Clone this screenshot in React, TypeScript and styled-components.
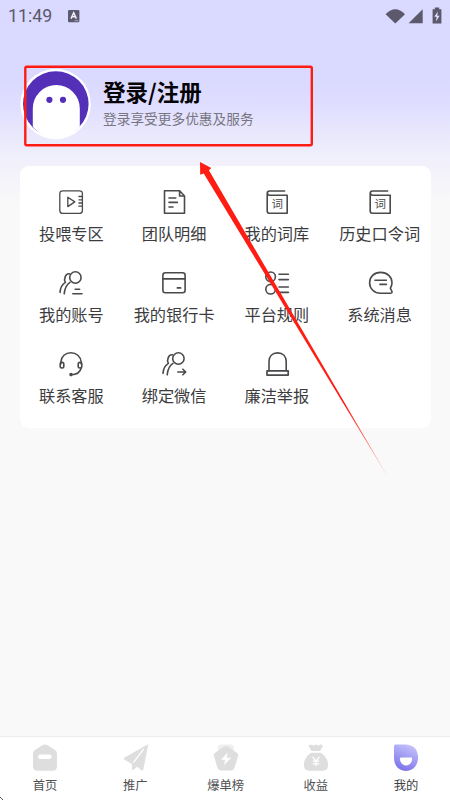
import React from 'react';
import styled, { createGlobalStyle, css } from 'styled-components';

const GlobalStyle = createGlobalStyle`
  * { box-sizing: border-box; }
  body { margin: 0; background: #f9f9f9; }
`;

const Screen = styled.div`
  position: relative;
  display: flex;
  flex-direction: column;
  width: 450px;
  height: 800px;
  overflow: hidden;
  background: linear-gradient(180deg, #dad9ff 0, #dad9ff 80px, #dfddff 103px, #ebeafc 140px, #f2f1fb 165px, #f9f9f9 205px);
  font-family: 'Noto Sans CJK SC', sans-serif;
`;

const StatusBar = styled.header`
  display: flex;
  align-items: center;
  height: 30px;
  padding: 1px 8px 0 8px;
  color: #5b596b;
`;

const Clock = styled.span`
  width: 60px;
  font: 400 17.8px/20px Roboto, sans-serif;
`;

const StatusIcons = styled.div`
  display: flex;
  align-items: center;
  margin-left: auto;
`;

const Profile = styled.section`
  display: flex;
  align-items: flex-start;
  height: 136px;
  padding: 38px 0 0 20px;
`;

const Avatar = styled.svg`
  display: block;
  width: 72px;
  height: 72px;
`;

const ProfileText = styled.div`
  padding: 7px 0 0 11px;
`;

const Title = styled.h1`
  margin: 0;
  color: #050507;
  font-size: 22.5px;
  font-weight: 700;
  line-height: 32px;
  white-space: nowrap;
`;

const Subtitle = styled.p`
  margin: 1px 0 0;
  color: #77757f;
  font-size: 13.7px;
  line-height: 20px;
  white-space: nowrap;
`;

const Panel = styled.main`
  display: grid;
  grid-template-columns: repeat(4, 102.75px);
  grid-auto-rows: 81.2px;
  width: 411px;
  height: 261.5px;
  margin-left: 20px;
  padding-top: 24px;
  border-radius: 9px;
  background: #fff;
`;

const MenuItem = styled.div`
  display: flex;
  flex-direction: column;
  align-items: center;
  gap: 9px;
  color: #3c3c3e;
`;

const MenuIcon = styled.svg`
  display: block;
  width: 24px;
  height: 24px;
  fill: none;
  stroke: #4a4a4c;
  stroke-width: 1.6;
  stroke-linecap: round;
  stroke-linejoin: round;
  overflow: visible;

  text {
    fill: #4a4a4c;
    stroke: none;
    font-size: 11.5px;
  }
`;

const MenuLabel = styled.span`
  font-size: 16.2px;
  line-height: 20px;
  white-space: nowrap;
`;

const TabBar = styled.nav`
  display: grid;
  grid-template-columns: repeat(5, 90.25px);
  height: 64px;
  margin-top: auto;
  border-top: 1px solid #ededed;
  background: #fff;
`;

const Tab = styled.div<{ $active?: boolean }>`
  display: flex;
  flex-direction: column;
  align-items: center;
  padding-top: 7px;
  color: #505052;
  ${(p) => p.$active && css`color: #404042;`}
`;

const TabIcon = styled.svg`
  display: block;
  width: 28px;
  height: 28px;
  fill: #dedede;
`;

const TabLabel = styled.span`
  margin-top: 4px;
  font-size: 12.3px;
  line-height: 18px;
`;

const Annotation = styled.svg`
  position: absolute;
  left: 0;
  top: 0;
  width: 450px;
  height: 800px;
  pointer-events: none;
`;

const Book = () => (
  <>
    <path d="M22.2 5.2V23.2H4.2Q2.2 23.2 2.2 21V3.4Q2.2 1 4.6 1H19.6M2.4 3.2Q2.6 5.2 4.6 5.2H22.2" />
    <text x="6.6" y="18.4">词</text>
  </>
);

const People = () => (
  <>
    <circle cx="16.4" cy="6.5" r="5.7" />
    <path d="M10.4 2.8C6.6 2.4 4.4 7.8 6.4 11.4C3.2 13.4 1.2 17.6 1 21.4M11 11.4C7.4 13.6 5.7 17.6 5.2 22.8" />
  </>
);

const menu: { label: string; icon: React.ReactNode }[] = [
  {
    label: '投喂专区',
    icon: (
      <g strokeWidth="1.3">
        <path d="M23.4 5V3.8Q23.4 .8 20.4 .8H3.8Q.8 .8 .8 3.8V20.4Q.8 23.4 3.8 23.4H20.4Q23.4 23.4 23.4 20.4V19.4M23.4 5V19.4M19.9 6.5H23M19.9 9.8H23M19.9 13H23M19.9 16.2H23" />
        <path d="M8.8 7.2V16.6L15.8 11.9Z" />
      </g>
    ),
  },
  {
    label: '团队明细',
    icon: (
      <path d="M17.6 .8H2.5V23.3H22.5V6L17.6 .8V6H22.5M7 8H13.8M7 12.4H15.4M7 17H11" />
    ),
  },
  { label: '我的词库', icon: <Book /> },
  { label: '历史口令词', icon: <Book /> },
  {
    label: '我的账号',
    icon: (
      <>
        <People />
        <path d="M16.2 18.3H20.6M13.8 22.8H23" />
      </>
    ),
  },
  {
    label: '我的银行卡',
    icon: (
      <>
        <rect x=".9" y="1.8" width="22.2" height="20" rx="2.5" />
        <path d="M.9 7.8H23.1M15.4 16.9H18.6" strokeWidth="1.7" />
      </>
    ),
  },
  {
    label: '平台规则',
    icon: (
      <>
        <circle cx="5.6" cy="5.8" r="4.8" />
        <circle cx="5.6" cy="18.2" r="4.8" />
        <path d="M14 3.2H23.4M14 8.6H23.4M14 16H23.4M14 21.4H23.4" />
      </>
    ),
  },
  {
    label: '系统消息',
    icon: (
      <path d="M12.6 1.4C6 1.4 1.6 6 1.6 11.8C1.6 17.8 6.4 22.2 12.4 22.2H22.6Q24.8 21.9 23.7 20L22.3 17.2Q24 14.8 24 11.8C24 6 19.2 1.4 12.6 1.4M7 9.3H18.4M12 13.4H18.4" />
    ),
  },
  {
    label: '联系客服',
    icon: (
      <>
        <path d="M1.8 12V10C2.2 4.4 6.5 .7 11.9 .7S21.6 4.4 22.2 10V12M22.2 16C21.2 20.2 17.5 22.6 12.2 22.8" />
        <rect x="1.2" y="10.4" width="3.6" height="5.6" rx="1.7" />
        <rect x="19.2" y="10.4" width="3.6" height="5.6" rx="1.7" />
        <circle cx="12" cy="22.6" r="1" fill="#4a4a4c" />
      </>
    ),
  },
  {
    label: '绑定微信',
    icon: (
      <>
        <People />
        <path d="M15.8 20H23.6M20.9 17.2L23.7 20L20.9 22.8" />
      </>
    ),
  },
  {
    label: '廉洁举报',
    icon: (
      <>
        <path d="M4 18.8V9.6C4 4.4 7.2 .9 12.6 .9S21.2 4.4 21.2 9.6V18.8" />
        <path d="M2 18.9H23.2V23.1H2Z" strokeWidth="1.7" />
      </>
    ),
  },
];

const tabs: { label: string; active?: boolean; icon: React.ReactNode }[] = [
  {
    label: '首页',
    icon: (
      <>
        <path d="M11.4 1.2Q14 -.1 16.6 1.2L24 6Q26 7.2 26 10V22.2Q26 26.8 21.4 26.8H6.6Q2 26.8 2 22.2V10Q2 7.2 4 6Z" />
        <rect x="7" y="10.4" width="13.6" height="4.6" rx="2.3" fill="#fff" />
      </>
    ),
  },
  {
    label: '推广',
    icon: (
      <>
        <path d="M26.6 .5Q27.4 .3 27.1 1.5L22.3 25.6Q21.9 27.2 20.6 26.3L16 22.8L12.5 25.8Q11 26.7 11 24.7V20.2L3.4 15.6Q2 14.4 3.6 13.5Z" />
        <path d="M22.7 5.2L12.3 18.6" fill="none" stroke="#fff" strokeWidth="1.3" />
      </>
    ),
  },
  {
    label: '爆单榜',
    icon: (
      <>
        <rect x="6" y=".5" width="16" height="15" rx="3" fill="#f0f0f0" />
        <path d="M11.6 2.8Q14 1.2 16.4 2.8L24.8 8.8Q26.8 10.2 25.9 12.6L22.6 23.4Q21.6 26.5 18.3 26.5H9.7Q6.4 26.5 5.4 23.4L2.1 12.6Q1.2 10.2 3.2 8.8Z" />
        <path d="M15.8 8.4L9 15.8H13.2L11.8 21.3L19.2 13.7H14.6Z" fill="#fff" />
      </>
    ),
  },
  {
    label: '收益',
    icon: (
      <>
        <path d="M9.5 7L6.9 2.6Q6.5 .2 9.1 .8L11.4 1.5L13.9 .4L16.4 1.5L18.8 .6Q21 .4 20.6 2.5L18.2 7Z" />
        <path d="M9.2 8.8H18.8C23.6 11.8 26.4 16.6 26 21.6Q25.7 26.8 20.8 26.8H7.2Q2.3 26.8 2 21.6C1.6 16.6 4.4 11.8 9.2 8.8Z" />
        <path d="M10.6 12.8L14 17.1L17.4 12.8M14 17.1V22M10.8 17.2H17.2M10.8 19.8H17.2" fill="none" stroke="#fff" strokeWidth="1.3" />
      </>
    ),
  },
  {
    label: '我的',
    active: true,
    icon: (
      <>
        <defs>
          <linearGradient id="mine" x1=".75" y1="0" x2=".35" y2="1">
            <stop offset="0" stopColor="#c7c4fc" />
            <stop offset="1" stopColor="#7b73e8" />
          </linearGradient>
        </defs>
        <path d="M3.6 .5H14Q26 1.4 26 13.4C26 21.5 21 27 14 27S2 21.5 2 14V2Q2 .5 3.6 .5Z" fill="url(#mine)" />
        <path d="M9.2 13.4H19Q20.4 13.4 20.2 15C19.6 19.2 17.2 21.4 14.1 21.4S8.4 19.2 7.9 15Q7.8 13.4 9.2 13.4Z" fill="#fff" />
      </>
    ),
  },
];

export default function App() {
  return (
    <>
      <GlobalStyle />
      <Screen>
        <StatusBar>
          <Clock>11:49</Clock>
          <svg width="12" height="14" viewBox="0 0 12 14">
            <rect y="1" width="11.4" height="12.2" rx="1.3" fill="#5b596b" />
            <path d="M3 9.6L5.7 3.7L8.4 9.6M4 7.7H7.4" fill="none" stroke="#efedff" strokeWidth="1.5" />
            <path d="M6.5 11.7H10.5" stroke="#bbb8d2" strokeWidth=".8" />
          </svg>
          <StatusIcons>
            <svg width="57" height="18" viewBox="385 6 57 18" fill="#5b596b">
              <path d="M385.6 13.2Q395.3 3.5 405 13.2L395.3 22.6Z" />
              <path d="M422.7 8.2V22.3H408.6Z" />
              <path d="M434.8 6.4H439.2V8.2H441.4V22.5H432.6V8.2H434.8Z" />
              <path d="M437.8 10.5L434.3 15.7H436.6L436 20.5L439.6 14.7H437.3Z" fill="#e3e1ff" />
            </svg>
          </StatusIcons>
        </StatusBar>

        <Profile>
          <Avatar viewBox="0 0 72 72">
            <circle cx="35.6" cy="36" r="35.2" fill="#fff" />
            <circle cx="35.8" cy="36" r="32.8" fill="#5430b8" />
            <path d="M12.8 59V40.5A23.5 23.5 0 0 1 59.8 40.5V59Q49 69.8 36 69.8T12.8 59Z" fill="#fff" />
            <circle cx="29.4" cy="31.8" r="3.1" fill="#5430b8" />
            <circle cx="43" cy="31.8" r="3.1" fill="#5430b8" />
          </Avatar>
          <ProfileText>
            <Title>登录/注册</Title>
            <Subtitle>登录享受更多优惠及服务</Subtitle>
          </ProfileText>
        </Profile>

        <Panel>
          {menu.map((item) => (
            <MenuItem key={item.label}>
              <MenuIcon viewBox="0 0 24 24">{item.icon}</MenuIcon>
              <MenuLabel>{item.label}</MenuLabel>
            </MenuItem>
          ))}
        </Panel>

        <TabBar>
          {tabs.map((tab) => (
            <Tab key={tab.label} $active={tab.active}>
              <TabIcon viewBox="0 0 28 28">{tab.icon}</TabIcon>
              <TabLabel>{tab.label}</TabLabel>
            </Tab>
          ))}
        </TabBar>

        <Annotation viewBox="0 0 450 800">
          <defs>
            <linearGradient id="tail" gradientUnits="userSpaceOnUse" x1="200" y1="162" x2="389" y2="479">
              <stop offset="0" stopColor="#ff1c12" />
              <stop offset=".76" stopColor="#ff1c12" />
              <stop offset="1" stopColor="#ff1c12" stopOpacity=".3" />
            </linearGradient>
          </defs>
          <rect x="25.3" y="66.8" width="286.5" height="78.4" rx="1.5" fill="none" stroke="#ff1c12" strokeWidth="2.4" />
          <path d="M200 162L211.3 168L208.9 170.2L390 480.5L203.7 173.4L200.2 174.8Z" fill="url(#tail)" />
          <path d="M0 797L3 800" stroke="#555" strokeWidth="1" />
        </Annotation>
      </Screen>
    </>
  );
}
